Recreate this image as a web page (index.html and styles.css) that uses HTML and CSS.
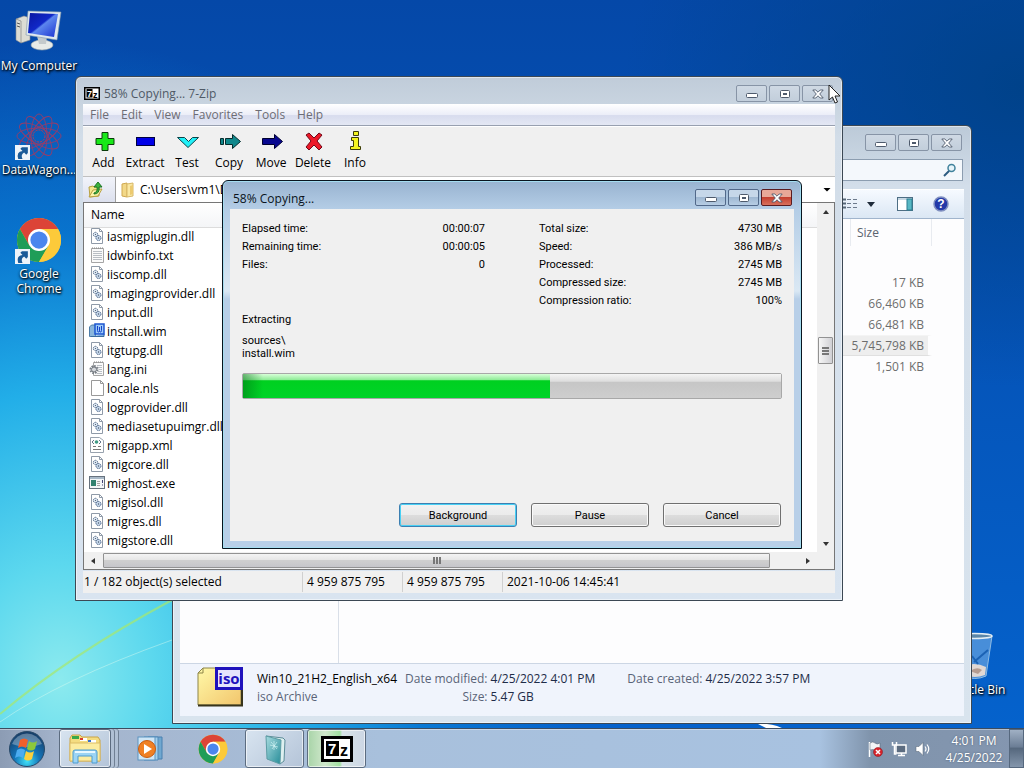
FILE: index.html
```html
<!DOCTYPE html>
<html lang="en">
    <head>
        <meta charset="UTF-8" />
        <meta name="viewport" content="width=device-width, initial-scale=1.0" />
        <title>Desktop</title>
        <link rel="stylesheet" href="styles.css">
    </head>
    <body>
        <!-- shared icons -->
        <svg class="sprites" aria-hidden="true">
            <defs>
                <linearGradient id="g-screen" x1="0" y1="0" x2="1" y2="1">
                    <stop offset="0" stop-color="#0a16a0" />
                    <stop offset="0.45" stop-color="#1028c8" />
                    <stop offset="0.5" stop-color="#5c86ee" />
                    <stop offset="1" stop-color="#1a30d0" />
                </linearGradient>
                <linearGradient id="g-folder" x1="0" y1="0" x2="1" y2="1">
                    <stop offset="0" stop-color="#fff9a8" />
                    <stop offset="1" stop-color="#f2c56c" />
                </linearGradient>
                <radialGradient id="g-orb" cx="0.5" cy="0.85" r="0.8">
                    <stop offset="0" stop-color="#3fe0f8" />
                    <stop offset="0.45" stop-color="#1474b8" />
                    <stop offset="1" stop-color="#16406c" />
                </radialGradient>
                <linearGradient id="g-book" x1="0" y1="0" x2="1" y2="1">
                    <stop offset="0" stop-color="#a8dce0" />
                    <stop offset="1" stop-color="#268c98" />
                </linearGradient>
            </defs>
            <symbol id="win-min" viewBox="0 0 12 12">
                <rect x=".5" y="5.500" width="11" height="4" rx="1" fill="#fff" stroke="#4e5a6c" />
            </symbol>
            <symbol id="win-max" viewBox="0 0 12 12">
                <rect x="1.500" y="2.500" width="9" height="7" rx="1" fill="#fff" stroke="#4e5a6c" />
                <rect x="4.500" y="5.500" width="3" height="1" fill="#c5d3e2" stroke="#4e5a6c" />
            </symbol>
            <symbol id="win-close" viewBox="0 0 12 12">
                <path d="M.8 2h3l2.200 2.200L8.200 2h3L7.700 6l3.500 4h-3L6 7.800 3.800 10h-3l3.500-4z" fill="#fff" stroke="#4e5a6c" stroke-width=".9" />
            </symbol>
            <symbol id="file-dll" viewBox="0 0 16 16">
                <path d="M2.500 .5h8l3 3v12h-11z" fill="#fff" stroke="#8f9aa8" />
                <path d="M10.500 .5v3h3" fill="none" stroke="#8f9aa8" />
                <circle cx="6.500" cy="6.500" r="2.200" fill="#dde8f4" stroke="#5a6f8c" stroke-dasharray="1.500 .6" />
                <circle cx="9.500" cy="10" r="2.500" fill="#c9daee" stroke="#4a6488" stroke-dasharray="1.500 .6" />
                <circle cx="6.500" cy="6.500" r=".6" fill="#456" />
                <circle cx="9.500" cy="10" r=".7" fill="#456" />
            </symbol>
            <symbol id="file-txt" viewBox="0 0 16 16">
                <path d="M2.500 1.500h12v14h-12z" fill="#fafafa" stroke="#a5a5a5" />
                <path d="M3 1h12" stroke="#888" stroke-dasharray="1 1" />
                <path d="M4 4.500h9M4 6.500h9M4 8.500h9M4 10.500h9M4 12.500h9" stroke="#b9bec4" />
            </symbol>
            <symbol id="file-blank" viewBox="0 0 16 16">
                <path d="M2.500 .5h9l3 3v12h-12z" fill="#fff" stroke="#999" />
                <path d="M11.500 .5v3h3" fill="none" stroke="#999" />
            </symbol>
            <symbol id="file-ini" viewBox="0 0 16 16">
                <path d="M4.500 1.500h10v13h-10z" fill="#fafafa" stroke="#a5a5a5" />
                <path d="M5 1h10" stroke="#888" stroke-dasharray="1 1" />
                <path d="M8 4.500h5M9 6.500h4M10 8.500h3M9 10.500h4M8 12.500h5" stroke="#b9bec4" />
                <circle cx="5" cy="8.500" r="3.500" fill="none" stroke="#777d84" stroke-width="2" stroke-dasharray="1.700 1" />
                <circle cx="5" cy="8.500" r="2.500" fill="#d5d8dc" stroke="#70767e" />
            </symbol>
            <symbol id="file-wim" viewBox="0 0 16 16">
                <path d="M.5 4l2-2h4v11.500h-6z" fill="#8ab6dc" stroke="#4d7ca8" />
                <path d="M2 13.500h13V11" fill="#7fb0e0" stroke="#3a6ca0" />
                <rect x="6" y="1" width="9" height="10" fill="#9ccaf8" stroke="#1c56d0" stroke-width="1.500" />
                <path d="M8.500 3v4.500q0 1.500 1 1.500t1-1.500V4v3.500q0 1.500 1 1.500t1-1.500V3" fill="none" stroke="#1540c8" />
            </symbol>
            <symbol id="file-xml" viewBox="0 0 16 16">
                <path d="M1.500 .5h9l4 3v12h-13z" fill="#fff" stroke="#98a2ae" />
                <path d="M5 3L3 5l2 2M10 3l2 2-2 2" fill="none" stroke="#64748a" />
                <circle cx="7.500" cy="5" r="1.800" fill="#3e9a84" />
                <path d="M4 9.500h3M9 9.500h3M4 12.500h8" stroke="#777" />
            </symbol>
            <symbol id="file-exe" viewBox="0 0 16 16">
                <rect x=".5" y="1.500" width="15" height="12" fill="#f4f7f9" stroke="#67727e" />
                <path d="M1 3h14" stroke="#a9b9c8" stroke-width="2" />
                <rect x="2" y="5" width="5" height="6" fill="#328271" />
                <path d="M8 6.500h3M8 8.500h3M8 10.500h3" stroke="#a5a5a5" />
                <path d="M13.500 5v3M13.500 9.500v1" stroke="#447" />
            </symbol>
            <symbol id="logo-chrome" viewBox="0 0 48 48">
                <circle cx="24" cy="24" r="23" fill="#fbc934" />
                <path d="M4.100 12.500A23 23 0 0 1 43.900 12.500H24L14 29.800z" fill="#dc4437" />
                <path d="M4.100 12.500A23 23 0 0 0 24 47L34 29.700 14 29.700z" fill="#1f9d58" />
                <path d="M24 47a23 23 0 0 0 19.900-34.500H24L34 29.700z" fill="#fcca3a" />
                <circle cx="24" cy="24" r="11.500" fill="#fff" />
                <circle cx="24" cy="24" r="9" fill="#4b86ee" />
            </symbol>
            <symbol id="shortcut" viewBox="0 0 14 14">
                <rect width="14" height="14" fill="#eef4fa" />
                <path d="M3 13Q1 6 7 5.500L5 3.500 6.500 2H12v5.500L10.500 9l-2-2Q5 9 7 13z" fill="#1a5a98" />
            </symbol>
        </svg>

        <main class="desktop">
            <svg class="wallpaper" viewBox="0 0 1024 728" preserveAspectRatio="none" aria-hidden="true">
                <path d="M0 714Q70 655 172 600" fill="none" stroke="#a6e86c" stroke-opacity=".7" stroke-width="2" />
                <path d="M0 722Q60 680 172 640" fill="none" stroke="#e8fff0" stroke-opacity=".4" stroke-width="1" />
                <path d="M758 724q12-1 24 4h-16z" fill="#fff" />
            </svg>

            <a class="shortcut my-computer" href="#">
                <svg width="48" height="48" viewBox="0 0 48 48">
                    <path d="M1 11l8-3 6 2v22l-9 3-5-3z" fill="#dcdcd4" stroke="#8b8f92" stroke-width=".6" />
                    <path d="M1 11l5 2v22" fill="none" stroke="#777" stroke-width=".6" />
                    <path d="M2 15l3 1M2 18l3 1" stroke="#555" />
                    <ellipse cx="27" cy="37" rx="11" ry="5" fill="#e8ebe8" stroke="#a0a8a8" stroke-width=".6" />
                    <path d="M22 28h10l-1 8h-7z" fill="#c4cacc" />
                    <path d="M13 3l33 1-4 28-31-5z" fill="#dfe8ee" stroke="#7e94a8" stroke-width=".6" />
                    <path d="M15 5l28 1-4 23-26-4z" fill="url(#g-screen)" />
                </svg>
                <span>My Computer</span>
            </a>
            <a class="shortcut datawagon" href="#">
                <svg width="48" height="48" viewBox="0 0 48 48">
                    <g fill="none" stroke="#983c68" stroke-width=".9">
                        <ellipse cx="24" cy="24" rx="22" ry="8" />
                        <ellipse cx="24" cy="24" rx="22" ry="8" transform="rotate(30 24 24)" />
                        <ellipse cx="24" cy="24" rx="22" ry="8" transform="rotate(60 24 24)" />
                        <ellipse cx="24" cy="24" rx="22" ry="8" transform="rotate(90 24 24)" />
                        <ellipse cx="24" cy="24" rx="22" ry="8" transform="rotate(120 24 24)" />
                        <ellipse cx="24" cy="24" rx="22" ry="8" transform="rotate(150 24 24)" />
                    </g>
                    <circle cx="24" cy="24" r="6" fill="none" stroke="#c23a50" stroke-dasharray="2 1" />
                    <use href="#shortcut" x="0" y="33" width="15" height="15" />
                </svg>
                <span>DataWagon...</span>
            </a>
            <a class="shortcut chrome" href="#">
                <svg width="48" height="48" viewBox="0 0 48 48">
                    <use href="#logo-chrome" x="1" y="1" width="46" height="46" />
                    <use href="#shortcut" x="0" y="33" width="15" height="15" />
                </svg>
                <span>Google Chrome</span>
            </a>
            <a class="shortcut recycle-bin" href="#">
                <svg width="48" height="48" viewBox="0 0 48 48">
                    <path d="M7 4h35l-6 40q-11 5-23 0z" fill="#9cc8ee" fill-opacity=".45" stroke="#8fbce4" />
                    <path d="M12 35q12-6 24 0l-1 8q-10 4-21 0z" fill="#e0d8d4" />
                    <path d="M20 39q7-5 12-1l-4 4z" fill="#b59c90" />
                    <path d="M24 30l14-12M22 24l6 8" stroke="#1c62b4" stroke-width="2" />
                    <ellipse cx="24.500" cy="4" rx="17.500" ry="2.500" fill="#5b86a8" stroke="#e4eef4" stroke-width="1.500" />
                </svg>
                <span>Recycle Bin</span>
            </a>

            <!-- file explorer -->
            <section class="window explorer">
                <header class="titlebar">
                    <div class="caption-buttons">
                        <button aria-label="Minimize"><svg width="12" height="12"><use href="#win-min" /></svg></button>
                        <button aria-label="Maximize"><svg width="12" height="12"><use href="#win-max" /></svg></button>
                        <button aria-label="Close"><svg width="12" height="12"><use href="#win-close" /></svg></button>
                    </div>
                </header>
                <div class="search-row">
                    <div class="search-box">
                        <input type="text" aria-label="Search" />
                        <svg width="14" height="14" viewBox="0 0 14 14">
                            <circle cx="8.500" cy="5" r="3.500" fill="#e6f4fa" stroke="#40829c" stroke-width="1.500" />
                            <path d="M6 8l-5 5" stroke="#2c5c80" stroke-width="2" />
                        </svg>
                    </div>
                </div>
                <div class="commands">
                    <button aria-label="Change your view">
                        <svg width="34" height="16" viewBox="0 0 34 16">
                            <path d="M0 3.500h3M0 7.500h3M0 11.500h3" stroke="#567" stroke-width="2" />
                            <path d="M4 3.500h4M10 3.500h4M4 7.500h4M10 7.500h4M4 11.500h4M10 11.500h4" stroke="#6c7a8c" />
                            <path d="M24 6h8l-4 5z" fill="#1f2b3a" />
                        </svg>
                    </button>
                    <button aria-label="Show the preview pane">
                        <svg width="16" height="14" viewBox="0 0 16 14">
                            <rect x=".5" y=".5" width="15" height="13" fill="#fff" stroke="#4e6e84" />
                            <path d="M1 2h14" stroke="#8eb0c8" />
                            <rect x="10" y="2" width="5" height="11" fill="#58b8c4" stroke="#2b7c90" />
                        </svg>
                    </button>
                    <button aria-label="Get help">
                        <svg width="16" height="16" viewBox="0 0 16 16">
                            <circle cx="8" cy="8" r="7" fill="#2439a8" stroke="#8090c0" stroke-width="1.500" />
                            <text x="8" y="12" font-family="Liberation Sans" font-weight="bold" font-size="12" fill="#fff" text-anchor="middle">?</text>
                        </svg>
                    </button>
                </div>
                <div class="panes">
                    <nav class="nav-pane"></nav>
                    <div class="content-pane">
                        <table class="sizes">
                            <thead>
                                <tr><th class="col-name"></th><th>Size</th></tr>
                            </thead>
                            <tbody>
                                <tr><td></td><td>17 KB</td></tr>
                                <tr><td></td><td>66,460 KB</td></tr>
                                <tr><td></td><td>66,481 KB</td></tr>
                                <tr class="selected"><td></td><td>5,745,798 KB</td></tr>
                                <tr><td></td><td>1,501 KB</td></tr>
                            </tbody>
                        </table>
                    </div>
                </div>
                <footer class="details">
                    <svg width="46" height="40" viewBox="0 0 46 40">
                        <path d="M1 6l5-5h14v4h24v33H1z" fill="url(#g-folder)" stroke="#8d8548" />
                        <path d="M1 38.500h44V22" fill="none" stroke="#38341c" stroke-width="2" />
                        <path d="M6 1v5H1" fill="none" stroke="#8d8548" />
                        <rect x="19.500" y="1.500" width="25" height="20" fill="#e4e4fc" stroke="#1f12bc" stroke-width="3" />
                        <text x="32" y="17" font-family="Open Sans" font-weight="bold" font-size="15" fill="#1f12bc" text-anchor="middle">iso</text>
                    </svg>
                    <div class="details-name">
                        <strong>Win10_21H2_English_x64</strong>
                        <span>iso Archive</span>
                    </div>
                    <dl class="details-list">
                        <dt>Date modified:</dt>
                        <dd>4/25/2022 4:01 PM</dd>
                        <dt>Size:</dt>
                        <dd>5.47 GB</dd>
                    </dl>
                    <dl class="details-list created">
                        <dt>Date created:</dt>
                        <dd>4/25/2022 3:57 PM</dd>
                    </dl>
                </footer>
            </section>

            <!-- 7-Zip file manager -->
            <section class="window seven-zip">
                <header class="titlebar">
                    <svg width="16" height="13" viewBox="0 0 32 26">
                        <rect x="1.500" y="1.500" width="29" height="23" fill="#fff" stroke="#000" stroke-width="3" />
                        <rect x="5" y="4" width="12" height="17" fill="#000" />
                        <text x="6" y="19" font-family="Liberation Sans" font-weight="bold" font-size="18" fill="#fff">7</text>
                        <text x="18" y="21" font-family="Liberation Sans" font-weight="bold" font-size="18" fill="#000">z</text>
                    </svg>
                    <h1>58% Copying... 7-Zip</h1>
                    <div class="caption-buttons">
                        <button aria-label="Minimize"><svg width="12" height="12"><use href="#win-min" /></svg></button>
                        <button aria-label="Maximize"><svg width="12" height="12"><use href="#win-max" /></svg></button>
                        <button aria-label="Close"><svg width="12" height="12"><use href="#win-close" /></svg></button>
                    </div>
                </header>
                <nav class="menu">
                    <button>File</button>
                    <button>Edit</button>
                    <button>View</button>
                    <button>Favorites</button>
                    <button>Tools</button>
                    <button>Help</button>
                </nav>
                <div class="toolbar">
                    <button>
                        <svg width="24" height="22" viewBox="0 0 24 22"><path d="M10 2.500h6v6h6v6h-6v6h-6v-6H4v-6h6z" fill="#18e818" stroke="#0a3c0a" /></svg>
                        Add
                    </button>
                    <button>
                        <svg width="24" height="22" viewBox="0 0 24 22"><rect x="3.500" y="7.500" width="18" height="8" fill="#0000e8" stroke="#000040" /></svg>
                        Extract
                    </button>
                    <button>
                        <svg width="24" height="22" viewBox="0 0 24 22"><path d="M2.500 7.500h7l4 4 4-4h6L13 17.500z" fill="#20f0f8" stroke="#0c4448" /></svg>
                        Test
                    </button>
                    <button>
                        <svg width="24" height="22" viewBox="0 0 24 22"><path d="M3.500 8.500h3v6h-3zM8.500 8.500h7v-4l8 7-8 7v-4h-7z" fill="#10888c" stroke="#042c2c" /></svg>
                        Copy
                    </button>
                    <button>
                        <svg width="24" height="22" viewBox="0 0 24 22"><path d="M3.500 8.500h12v-4l8 7-8 7v-4h-12z" fill="#080890" stroke="#000030" /></svg>
                        Move
                    </button>
                    <button>
                        <svg width="24" height="22" viewBox="0 0 24 22"><path d="M5 5l3-2 5 5L18 3l3 2-5 6 5 6-3 3-5-5-5 5-3-3 5-6z" fill="#ec1828" stroke="#700818" /></svg>
                        Delete
                    </button>
                    <button>
                        <svg width="24" height="22" viewBox="0 0 24 22"><path d="M10.500 1.500h5v4h-5zM8.500 7.500h7v9h2v3h-10v-3h3v-6h-2z" fill="#f4f420" stroke="#3c3c08" /></svg>
                        Info
                    </button>
                </div>
                <div class="address">
                    <button class="up" aria-label="Up one level">
                        <svg width="18" height="18" viewBox="0 0 18 18">
                            <path d="M2 6l4-1 1 1h5v9l-9 1z" fill="#f4e88c" stroke="#b8a040" />
                            <path d="M2 16l4-7 9-1-4 7z" fill="#fcf4a8" stroke="#b8a040" />
                            <path d="M7 12q4-1 3-6H7l4-5 4 5h-3q1 7-5 7z" fill="#3cb43c" stroke="#1c7424" />
                        </svg>
                    </button>
                    <div class="path">
                        <svg width="16" height="16" viewBox="0 0 16 16">
                            <path d="M2 2l5-1v14l-5-1z" fill="#f2d888" stroke="#cfa850" />
                            <path d="M7 2l6-1v13l-6 1z" fill="#fae8a4" stroke="#d8b868" />
                            <path d="M10 4l3-1v9l-3 1z" fill="#ecca70" />
                        </svg>
                        <input type="text" value="C:\Users\vm1\Downloads\" aria-label="Path" />
                        <button class="arrow-down" aria-label="Show folders"></button>
                    </div>
                </div>
                <div class="file-area">
                    <div class="file-view">
                        <table class="files">
                            <thead>
                                <tr><th>Name</th></tr>
                            </thead>
                            <tbody>
                                <tr><td><svg width="16" height="16"><use href="#file-dll" /></svg>iasmigplugin.dll</td></tr>
                                <tr><td><svg width="16" height="16"><use href="#file-txt" /></svg>idwbinfo.txt</td></tr>
                                <tr><td><svg width="16" height="16"><use href="#file-dll" /></svg>iiscomp.dll</td></tr>
                                <tr><td><svg width="16" height="16"><use href="#file-dll" /></svg>imagingprovider.dll</td></tr>
                                <tr><td><svg width="16" height="16"><use href="#file-dll" /></svg>input.dll</td></tr>
                                <tr><td><svg width="16" height="16"><use href="#file-wim" /></svg>install.wim</td></tr>
                                <tr><td><svg width="16" height="16"><use href="#file-dll" /></svg>itgtupg.dll</td></tr>
                                <tr><td><svg width="16" height="16"><use href="#file-ini" /></svg>lang.ini</td></tr>
                                <tr><td><svg width="16" height="16"><use href="#file-blank" /></svg>locale.nls</td></tr>
                                <tr><td><svg width="16" height="16"><use href="#file-dll" /></svg>logprovider.dll</td></tr>
                                <tr><td><svg width="16" height="16"><use href="#file-dll" /></svg>mediasetupuimgr.dll</td></tr>
                                <tr><td><svg width="16" height="16"><use href="#file-xml" /></svg>migapp.xml</td></tr>
                                <tr><td><svg width="16" height="16"><use href="#file-dll" /></svg>migcore.dll</td></tr>
                                <tr><td><svg width="16" height="16"><use href="#file-exe" /></svg>mighost.exe</td></tr>
                                <tr><td><svg width="16" height="16"><use href="#file-dll" /></svg>migisol.dll</td></tr>
                                <tr><td><svg width="16" height="16"><use href="#file-dll" /></svg>migres.dll</td></tr>
                                <tr><td><svg width="16" height="16"><use href="#file-dll" /></svg>migstore.dll</td></tr>
                            </tbody>
                        </table>
                        <div class="scroll-v">
                            <svg width="8" height="4" viewBox="0 0 8 4"><path d="M1 4l3-4 3 4z" fill="#333" /></svg>
                            <div class="thumb"><i></i><i></i><i></i></div>
                            <svg width="8" height="4" viewBox="0 0 8 4"><path d="M1 0l3 4 3-4z" fill="#333" /></svg>
                        </div>
                    </div>
                    <div class="scroll-h">
                        <svg width="4" height="8" viewBox="0 0 4 8"><path d="M4 1L0 4l4 3z" fill="#333" /></svg>
                        <div class="thumb"><i></i><i></i><i></i></div>
                        <svg width="4" height="8" viewBox="0 0 4 8"><path d="M0 1l4 3-4 3z" fill="#333" /></svg>
                    </div>
                </div>
                <footer class="status">
                    <span class="status-selected">1 / 182 object(s) selected</span>
                    <span>4 959 875 795</span>
                    <span>4 959 875 795</span>
                    <span>2021-10-06 14:45:41</span>
                </footer>
            </section>

            <!-- progress dialog -->
            <section class="window dialog" role="dialog" aria-labelledby="dialog-title">
                <header class="titlebar">
                    <h2 id="dialog-title">58% Copying...</h2>
                    <div class="caption-buttons">
                        <button aria-label="Minimize"><svg width="12" height="12"><use href="#win-min" /></svg></button>
                        <button aria-label="Maximize"><svg width="12" height="12"><use href="#win-max" /></svg></button>
                        <button class="close" aria-label="Close"><svg width="12" height="12"><use href="#win-close" /></svg></button>
                    </div>
                </header>
                <div class="dialog-body">
                    <div class="stats">
                        <dl>
                            <div><dt>Elapsed time:</dt><dd>00:00:07</dd></div>
                            <div><dt>Remaining time:</dt><dd>00:00:05</dd></div>
                            <div><dt>Files:</dt><dd>0</dd></div>
                        </dl>
                        <dl>
                            <div><dt>Total size:</dt><dd>4730 MB</dd></div>
                            <div><dt>Speed:</dt><dd>386 MB/s</dd></div>
                            <div><dt>Processed:</dt><dd>2745 MB</dd></div>
                            <div><dt>Compressed size:</dt><dd>2745 MB</dd></div>
                            <div><dt>Compression ratio:</dt><dd>100%</dd></div>
                        </dl>
                    </div>
                    <label class="action" for="copy-progress">Extracting</label>
                    <p class="current-file">sources\<br>install.wim</p>
                    <progress id="copy-progress" max="100" value="57"></progress>
                    <div class="dialog-buttons">
                        <button class="default">Background</button>
                        <button>Pause</button>
                        <button>Cancel</button>
                    </div>
                </div>
            </section>

            <svg class="cursor" width="14" height="20" viewBox="0 0 14 20" aria-hidden="true">
                <path d="M1 1v15l3.500-3 2.500 6 2.500-1-2.500-6h5z" fill="#fff" stroke="#222" />
            </svg>
        </main>

        <footer class="taskbar">
            <button class="start" aria-label="Start">
                <svg width="38" height="38" viewBox="0 0 38 38">
                    <circle cx="19" cy="19" r="17.500" fill="url(#g-orb)" stroke="#274868" />
                    <path d="M4 14a16 16 0 0 1 30 0q-15 6-30 0z" fill="#fff" fill-opacity=".3" />
                    <path d="M12 10q4-3 8 0l-2 8q-4-3-8 0z" fill="#f0602c" />
                    <path d="M21 11q4 3 8 0l-2 8q-4 3-8 0z" fill="#8cc83c" />
                    <path d="M9 20q4-3 8 0l-2 8q-4-3-8 0z" fill="#4cacf0" />
                    <path d="M18 21q4 3 8 0l-2 8q-4 3-8 0z" fill="#fcd03c" />
                </svg>
            </button>
            <button class="task open stacked" aria-label="Windows Explorer">
                <svg width="32" height="32" viewBox="0 0 32 32">
                    <path d="M1 5l2-3h8l2 2h16l2 3v21H1z" fill="#f4dc80" stroke="#c8a448" />
                    <path d="M3 3h7v3H3z" fill="#38a848" /><path d="M11 5h7v3h-7z" fill="#fff" /><path d="M11 5h3v2h-3z" fill="#d83c2c" />
                    <path d="M19 7h8v3h-8z" fill="#fff" /><path d="M19 7h3v2h-3z" fill="#3870c8" />
                    <path d="M1 10h30v18H1z" fill="#fceca0" stroke="#dcbc64" />
                    <path d="M4 30V19q0-2 2-2h20q2 0 2 2v11h-5v-7H9v7z" fill="#9cd4f4" stroke="#4c9cd0" />
                    <path d="M6 19h20" stroke="#e8f8ff" stroke-width="2" />
                </svg>
            </button>
            <button class="task" aria-label="Windows Media Player">
                <svg width="30" height="28" viewBox="0 0 30 28">
                    <path d="M12 2h14v22H12z" fill="#70a8d0" stroke="#4880b0" />
                    <path d="M8 2h14v23H8z" fill="#a4d0ec" stroke="#5088b8" />
                    <rect x="2" y="2" width="17" height="23" fill="#cfe6f6" stroke="#5c94c0" />
                    <circle cx="11" cy="14" r="8.500" fill="#f08024" stroke="#c85c10" />
                    <path d="M8 9l8 5-8 5z" fill="#fff" />
                </svg>
            </button>
            <button class="task" aria-label="Google Chrome">
                <svg width="30" height="30"><use href="#logo-chrome" /></svg>
            </button>
            <button class="task open" aria-label="Installer">
                <svg width="32" height="32" viewBox="0 0 32 32">
                    <path d="M7 3l17 2 2 2-1 21-4 3" fill="#def0f0" stroke="#5c8c98" />
                    <path d="M7 3l15 4-1 24-13-5z" fill="url(#g-book)" stroke="#5c9ca4" />
                    <path d="M12 9l6 7M18 9l-5 7M15 8v9M11 12l8 2" stroke="#e0fcfc" stroke-opacity=".6" fill="none" />
                </svg>
            </button>
            <button class="task open copying" aria-label="7-Zip">
                <svg width="32" height="26" viewBox="0 0 32 26">
                    <rect x="1.500" y="1.500" width="29" height="23" fill="#fff" stroke="#000" stroke-width="3" />
                    <rect x="5" y="5" width="13" height="15" fill="#000" />
                    <text x="7" y="18" font-family="Liberation Sans" font-weight="bold" font-size="15" fill="#fff">7</text>
                    <text x="19" y="20" font-family="Liberation Sans" font-weight="bold" font-size="16" fill="#000">z</text>
                </svg>
            </button>
            <div class="tray">
                <svg width="16" height="16" viewBox="0 0 16 16">
                    <path d="M2.500 1v15" stroke="#fff" stroke-width="1.500" />
                    <path d="M3 2q3-2 5 0t5 0v7q-3 1-5 0t-5 0z" fill="#f4f6f8" stroke="#526070" stroke-width=".5" />
                    <circle cx="11" cy="11" r="4.500" fill="#d8242c" stroke="#881018" stroke-width=".5" />
                    <path d="M9 9l4 4M13 9l-4 4" stroke="#fff" stroke-width="1.500" />
                </svg>
                <svg width="16" height="16" viewBox="0 0 16 16">
                    <rect x="5" y="4" width="10" height="8" fill="#5c6c80" stroke="#fff" stroke-width="1.500" />
                    <path d="M7 14.500h7M10.500 12v2" stroke="#fff" stroke-width="1.500" />
                    <path d="M1.500 1v3h4V1M3.500 4v9h2" fill="none" stroke="#fff" stroke-width="1.500" />
                </svg>
                <svg width="16" height="16" viewBox="0 0 16 16">
                    <path d="M1 5.500h3l4-4v13l-4-4H1z" fill="#fff" stroke="#526070" stroke-width=".5" />
                    <path d="M10 5.500q2 2.500 0 5M12 3.500q3.500 4.500 0 9" fill="none" stroke="#fff" stroke-width="1.200" />
                </svg>
                <time class="clock">4:01 PM<br>4/25/2022</time>
            </div>
            <button class="show-desktop" aria-label="Show desktop"></button>
        </footer>
    </body>
</html>
```
FILE: styles.css
```css
* {
    box-sizing: border-box;
}

body {
    margin: 0;
    height: 100vh;
    display: flex;
    flex-direction: column;
    overflow: hidden;
    font-family: "Open Sans", sans-serif;
    font-size: 12px;
    color: #000;
}

button,
input {
    font: inherit;
    color: inherit;
    border: 0;
    padding: 0;
    background: none;
}

svg {
    display: block;
    flex: none;
}

.sprites {
    position: absolute;
    width: 0;
    height: 0;
}

h1,
h2,
p,
dl,
dd {
    margin: 0;
    font-size: inherit;
    font-weight: normal;
}

/* desktop */
.desktop {
    position: relative;
    flex: 1;
    overflow: hidden;
    background:
        radial-gradient(ellipse 520px 640px at 60px 680px, #8ceaee 0%, #5cd8ee 18%, #22aee8 45%, rgba(10, 130, 216, 0.7) 70%, rgba(5, 90, 190, 0) 100%),
        radial-gradient(ellipse 400px 300px at 100% 12%, #00428a 0%, rgba(0, 66, 138, 0) 100%),
        linear-gradient(#0548a8, #0562cc);
}

.wallpaper {
    width: 100%;
    height: 100%;
}

.shortcut {
    position: absolute;
    width: 78px;
    display: flex;
    flex-direction: column;
    align-items: center;
    gap: 2px;
    color: #fff;
    text-align: center;
    text-decoration: none;
    line-height: 15px;
    text-shadow: 1px 1px 2px #000, 0 1px 3px #000;
}

.my-computer {
    left: 0;
    top: 8px;
}

.datawagon {
    left: 0;
    top: 112px;
}

.chrome {
    left: 0;
    top: 216px;
}

.recycle-bin {
    left: 935px;
    top: 632px;
}

.cursor {
    position: absolute;
    left: 828px;
    top: 84px;
}

/* windows */
.window {
    position: absolute;
    display: flex;
    flex-direction: column;
    padding: 0 7px 7px;
    border: 1px solid #3c4854;
    border-radius: 6px 6px 0 0;
    background: linear-gradient(#c0ccd9, #d2dde8 60px, #d9e4f0);
    box-shadow: inset 0 0 0 1px rgba(255, 255, 255, 0.5);
}

.titlebar {
    flex: none;
    height: 27px;
    display: flex;
    align-items: center;
    gap: 4px;
    padding-top: 6px;
    color: #4f5966;
}

.caption-buttons {
    display: flex;
    align-self: flex-start;
    gap: 2px;
    margin-left: auto;
    padding: 2px 2px 0 0;
}

.caption-buttons button {
    width: 31px;
    height: 17px;
    display: flex;
    align-items: center;
    justify-content: center;
    border: 1px solid #8794a6;
    border-radius: 2px;
    background: linear-gradient(#cfd9e4, #c2cedb);
}

/* explorer */
.explorer {
    left: 172px;
    top: 125px;
    width: 800px;
    height: 599px;
    background: linear-gradient(#bccad8, #d3deea 60px, #d9e4ee);
}

.search-row {
    flex: none;
    height: 36px;
    display: flex;
    justify-content: flex-end;
    align-items: flex-start;
    padding: 6px 1px 0 0;
}

.search-box {
    width: 220px;
    height: 22px;
    display: flex;
    align-items: center;
    padding-right: 5px;
    border: 1px solid #8c9db0;
    background: #f4f8fc;
}

.search-box input {
    flex: 1;
    min-width: 0;
}

.commands {
    flex: none;
    height: 30px;
    display: flex;
    align-items: center;
    justify-content: flex-end;
    gap: 20px;
    padding-right: 15px;
    border-top: 1px solid #fff;
    border-bottom: 1px solid #a0b4cc;
    background: linear-gradient(#f6faff, #dbe7f4);
}

.panes {
    flex: 1;
    min-height: 0;
    display: flex;
    background: #fdfdfe;
}

.nav-pane {
    width: 159px;
    border-right: 1px solid #d9dfe8;
}

.content-pane {
    flex: 1;
    padding-right: 32px;
}

.sizes {
    width: 100%;
    border-spacing: 0;
    color: #6d6d6d;
}

.sizes th {
    width: 81px;
    height: 27px;
    padding: 0 6px;
    border-right: 1px solid #e8ebf0;
    color: #5a6470;
    font-weight: normal;
    text-align: left;
}

.sizes .col-name {
    width: auto;
}

.sizes tbody::before {
    content: "";
    display: table-row;
    height: 26px;
}

.sizes td {
    height: 21px;
    padding: 0;
    text-align: right;
}

.sizes td:last-child {
    padding-right: 4px;
    border-right: 4px solid transparent;
    background-clip: padding-box;
}

.sizes .selected td {
    background-color: #eeeeee;
    border-top: 1px solid #f4f4f4;
    border-bottom: 1px solid #e0e0e0;
}

.details {
    flex: none;
    height: 53px;
    display: flex;
    align-items: flex-start;
    padding: 3px 17px;
    border-top: 1px solid #ccd6e4;
    background: #f0f4fc;
    line-height: 18px;
    color: #5a6478;
    white-space: nowrap;
}

.details-name {
    width: 142px;
    margin: 3px 6px 0 14px;
}

.details-name strong {
    display: block;
    color: #000;
    font-weight: normal;
}

.details-list {
    display: grid;
    grid-template-columns: auto auto;
    column-gap: 3px;
    margin-top: 3px;
}

.details-list.created {
    margin-left: 32px;
}

.details-list dt {
    text-align: right;
}

.details-list dd {
    color: #1e2c48;
}

/* 7-zip */
.seven-zip {
    left: 75px;
    top: 76px;
    width: 768px;
    height: 525px;
}

.seven-zip > .titlebar {
    padding-left: 1px;
}

.menu {
    flex: none;
    height: 22px;
    display: flex;
    align-items: center;
    gap: 12px;
    padding-left: 7px;
    border-bottom: 1px solid #98a0b0;
    background: linear-gradient(#fff, #eceef8 50%, #d8dcee 55%, #e4e8f4);
    color: #6d6d75;
}

.toolbar {
    flex: none;
    height: 51px;
    display: flex;
    border-top: 1px solid #fff;
    border-bottom: 1px solid #c0c0c0;
    background: #f0f0f0;
}

.toolbar button {
    width: 42px;
    display: flex;
    flex-direction: column;
    align-items: center;
    gap: 2px;
    padding-top: 3px;
    line-height: 18px;
}

.toolbar button:first-child {
    width: 41px;
}

.address {
    flex: none;
    height: 25px;
    display: flex;
    background: #f0f0f0;
}

.up {
    width: 32px;
    padding-left: 4px;
    background: linear-gradient(#f2f4fa, #dce0ee);
}

.path {
    flex: 1;
    display: flex;
    align-items: center;
    gap: 4px;
    padding: 0 4px;
    border-left: 1px solid #a0a0a0;
    background: #fff;
}

.path input {
    flex: 1;
    min-width: 0;
}

.arrow-down {
    width: 8px;
    height: 4px;
    background: #000;
    clip-path: polygon(0 0, 100% 0, 50% 100%);
}

.file-area {
    flex: 1;
    min-height: 0;
    display: flex;
    flex-direction: column;
    border: 1px solid #767676;
    background: #fff;
}

.file-view {
    flex: 1;
    min-height: 0;
    display: flex;
}

.files {
    flex: 1;
    align-self: flex-start;
    border-collapse: collapse;
}

.files th {
    height: 24px;
    padding: 0 7px;
    border-bottom: 1px solid #dcdcdc;
    background: linear-gradient(#fff, #f4f5f7);
    font-weight: normal;
    text-align: left;
}

.files td {
    height: 19px;
    padding: 0 0 0 5px;
    line-height: 17px;
}

.files td svg {
    float: left;
    margin-right: 2px;
}

.scroll-v {
    width: 17px;
    display: flex;
    flex-direction: column;
    align-items: center;
    padding: 7px 0 6px;
    background: #f0f0f0;
}

.scroll-v .thumb {
    width: 15px;
    height: 27px;
    margin: 123px 0 auto;
    flex-direction: column;
    background: linear-gradient(90deg, #f6f6f6, #d0d0d4);
}

.thumb {
    display: flex;
    align-items: center;
    justify-content: center;
    gap: 1px;
    border: 1px solid #929292;
    border-radius: 1px;
}

.scroll-v i {
    width: 7px;
    height: 2px;
    background: #777;
}

.scroll-h {
    flex: none;
    height: 17px;
    display: flex;
    align-items: center;
    padding: 0 24px 0 7px;
    background: #f0f0f0;
}

.scroll-h .thumb {
    flex: 1;
    height: 15px;
    margin: 0 36px 0 8px;
    background: linear-gradient(#f4f4f4, #e6e6e6 45%, #cfcfcf 50%, #c6c6ca);
}

.scroll-h i {
    width: 2px;
    height: 7px;
    background: #777;
}

.status {
    flex: none;
    height: 22px;
    margin-top: 1px;
    display: flex;
    align-items: center;
    background: #f0f0f0;
    line-height: 20px;
}

.status span {
    width: 100px;
    padding-left: 4px;
    border-left: 1px solid #d0d0d0;
    white-space: nowrap;
}

.status span:last-child {
    flex: 1;
}

.status .status-selected {
    width: 219px;
    padding-left: 1px;
    border-left: 0;
}

/* progress dialog */
.dialog {
    left: 222px;
    top: 180px;
    width: 580px;
    height: 369px;
    border-color: #08141e;
    background: linear-gradient(#98b3d0, #b4cde6 28px, #dae8f4 110px, #b8cfe8 118px, #b8cfe8);
    box-shadow: inset 0 0 0 1px #a4dcf0;
}

.dialog .titlebar {
    height: 28px;
    padding-left: 3px;
    color: #0a1420;
}

.dialog .caption-buttons button {
    border-color: #52698a;
    background: linear-gradient(#c6d7e9 45%, #9fb8d2 50%, #b7cde4);
}

.dialog .caption-buttons .close {
    border-color: #5a1c20;
    background: linear-gradient(#e8a898 45%, #c44030 50%, #d8705c);
}

.dialog-body {
    flex: 1;
    display: flex;
    flex-direction: column;
    padding: 11px 12px 14px;
    background: #f0f0f0;
    font-family: "Roboto", sans-serif;
    font-size: 11px;
}

.stats {
    display: grid;
    grid-template-columns: 243px 243px;
    justify-content: space-between;
    line-height: 18px;
}

.stats div {
    display: flex;
    justify-content: space-between;
}

.action {
    margin-top: 3px;
    line-height: 14px;
}

.current-file {
    margin-top: 7px;
    line-height: 13px;
}

progress {
    appearance: none;
    width: 100%;
    height: 26px;
    margin-top: 13px;
    border: 1px solid #a8a8a8;
    border-radius: 2px;
}

progress::-webkit-progress-bar {
    background: linear-gradient(#f4f4f4, #dedede 30%, #c6c6c6 35%, #cecece);
}

progress::-webkit-progress-value {
    background:
        linear-gradient(90deg, rgba(0, 110, 20, 0.5), transparent 20px),
        linear-gradient(#d8ffd8, #90ec98 24%, #00d020 28%, #00d428);
}

.dialog-buttons {
    display: flex;
    justify-content: flex-end;
    gap: 14px;
    margin-top: auto;
    padding-right: 1px;
}

.dialog-buttons button {
    width: 118px;
    height: 24px;
    border: 1px solid #707070;
    border-radius: 3px;
    background: linear-gradient(#f2f2f2, #ebebeb 49%, #dddddd 50%, #cfcfcf);
    box-shadow: inset 0 0 0 1px #fafafa;
}

.dialog-buttons .default {
    border-color: #3c7fb1;
    box-shadow: inset 0 0 0 1px #48d0f4;
}

/* taskbar */
.taskbar {
    flex: none;
    height: 40px;
    display: flex;
    align-items: stretch;
    border-top: 1px solid #3c4c60;
    background: linear-gradient(90deg, #8c9cb4, #a4b4cc 60px, #a8c0dc 380px, #a8c2e0 820px, #8094ac 870px, #8496b0);
    box-shadow: inset 0 1px 0 rgba(255, 255, 255, 0.4);
}

.start {
    width: 53px;
    margin-right: 6px;
    padding-left: 8px;
}

.task {
    width: 59px;
    margin-right: 3px;
    display: flex;
    align-items: center;
    justify-content: center;
}

.task.open {
    border: 1px solid #5c6c80;
    border-radius: 3px;
    background: linear-gradient(135deg, #d8e4f0, #b4c4d8);
    box-shadow: inset 0 0 0 1px rgba(255, 255, 255, 0.6);
}

.task.stacked {
    width: 52px;
    margin-right: 10px;
    box-shadow: inset 0 0 0 1px rgba(255, 255, 255, 0.6), 3px 0 0 #b0c0d4, 4px 0 0 #708094, 7px 0 0 #b0c0d4, 8px 0 0 #708094;
}

.task.copying {
    background: linear-gradient(90deg, #a8d4a8, #d0e8cc 30%, #a0e0a0 56%, #d8e4e8 60%, #ccd6e4);
}

.tray {
    display: flex;
    align-items: center;
    gap: 8px;
    margin-left: auto;
    color: #fff;
}

.clock {
    width: 70px;
    text-align: center;
    line-height: 17px;
    text-shadow: 0 0 2px #4c5c70;
}

.show-desktop {
    width: 15px;
    border: 1px solid #56687e;
    background: linear-gradient(#a0b0c4, #6c7e96 45%, #56687e 50%, #8496ac);
}
```
